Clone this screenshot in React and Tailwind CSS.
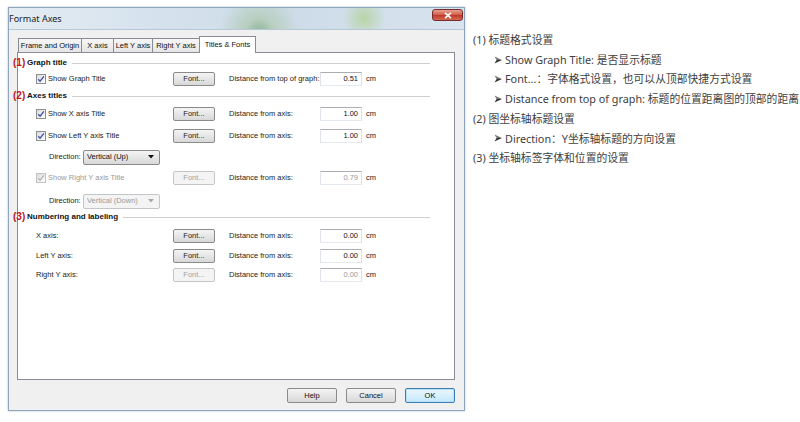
import React from "react";

const TABS = [
  { label: "Frame and Origin", w: "w-[63px]" },
  { label: "X axis", w: "w-[32px]" },
  { label: "Left Y axis", w: "w-[39px]" },
  { label: "Right Y axis", w: "w-[47px]" },
];

function Checkbox({ disabled }) {
  return (
    <span
      className={
        "w-[10px] h-[10px] flex items-center justify-center border bg-[linear-gradient(135deg,#dcdcdc,#ffffff)] " +
        (disabled ? "border-[#c2c2c2]" : "border-[#8e8f8f]")
      }
    >
      <svg width="8" height="8" viewBox="0 0 8 8">
        <path
          d="M1.2 4.2 L3.1 6.2 L6.9 1.4"
          fill="none"
          stroke={disabled ? "#b4b4b4" : "#3d57a0"}
          strokeWidth="1.4"
        />
      </svg>
    </span>
  );
}

function FontButton({ disabled }) {
  return (
    <button
      className={
        "w-[42px] h-[14px] rounded-[2px] border flex items-center justify-center text-[7.5px] " +
        (disabled
          ? "border-[#c3c6c8] bg-[#f4f4f4] text-[#a3a3a3]"
          : "border-[#8a8a8a] bg-[linear-gradient(#f4f4f4,#e6e6e6_50%,#d8d8d8)] text-[#222]")
      }
    >
      Font...
    </button>
  );
}

function NumBox({ value, disabled }) {
  return (
    <div
      className={
        "w-[42px] h-[14px] border border-[#abadb3] border-l-[#e2e3ea] border-r-[#dbdfe6] border-b-[#e3e9ef] bg-white flex items-center justify-end pr-[3px] text-[7.5px] " +
        (disabled ? "text-[#9a9a9a]" : "text-[#111]")
      }
    >
      {value}
    </div>
  );
}

function SettingRow({ mt, check, label, labelDisabled, disabled, distLabel, value }) {
  return (
    <div className={"flex items-center h-[14px] pl-[18px] " + mt}>
      <div className="w-[137px] flex items-center gap-[2px]">
        {check && <Checkbox disabled={labelDisabled} />}
        <span className={labelDisabled ? "text-[#9a9a9a]" : "text-[#222]"}>{label}</span>
      </div>
      <FontButton disabled={disabled} />
      <span className="ml-[14px] w-[91px] text-[#222]">{distLabel}</span>
      <NumBox value={value} disabled={disabled} />
      <span className="ml-[4px] text-[#222]">cm</span>
    </div>
  );
}

function Header({ mt, num, title }) {
  return (
    <div className={"relative flex items-center h-[14px] pl-[9px] pr-[24px] " + mt}>
      <span className="absolute left-[-5px] top-[0px] text-[10px] leading-[14px] font-bold text-[#c0141c] font-['Liberation_Sans',Arial,sans-serif]">
        ({num})
      </span>
      <span className="font-bold text-[8px] text-[#111]">{title}</span>
      <span className="flex-1 ml-[5px] h-px bg-[#cfcfcf]" />
    </div>
  );
}

function DirectionRow({ mt, value, disabled }) {
  return (
    <div className={"flex items-center h-[14px] pl-[31px] " + mt}>
      <span className="w-[34px] text-[#222]">Direction:</span>
      <div
        className={
          "w-[77px] h-[15px] rounded-[2px] border flex items-center justify-between pl-[3px] pr-[5px] " +
          (disabled
            ? "border-[#c3c6c8] bg-[#f4f4f4] text-[#9a9a9a]"
            : "border-[#8a8a8a] bg-[linear-gradient(#f4f4f4,#e6e6e6_50%,#d8d8d8)] text-[#111]")
        }
      >
        <span>{value}</span>
        <svg width="6" height="4" viewBox="0 0 6 4">
          <path d="M0 0 H6 L3 3.5 Z" fill={disabled ? "#a8a8a8" : "#111"} />
        </svg>
      </div>
    </div>
  );
}

function DlgButton({ label, primary }) {
  return (
    <button
      className={
        "w-[50px] h-[15px] rounded-[2px] border flex items-center justify-center text-[7.5px] text-[#111] " +
        (primary
          ? "border-[#3c7fb1] bg-[linear-gradient(#eaf6fd,#d9f0fc_50%,#bee6fd)] shadow-[inset_0_0_0_1px_#b9e0f7]"
          : "border-[#8a8a8a] bg-[linear-gradient(#f4f4f4,#e6e6e6_50%,#d8d8d8)]")
      }
    >
      {label}
    </button>
  );
}

function Bullet({ children }) {
  return (
    <div className="flex items-center pl-[21px] whitespace-nowrap">
      <svg className="w-[11px] shrink-0" width="11" height="8" viewBox="0 0 11 8">
        <path d="M0.5 0.5 L8 4 L2.6 4 Z" fill="#777" />
        <path d="M0.5 7.5 L8 4 L2.6 4 Z" fill="#333" />
      </svg>
      <span>{children}</span>
    </div>
  );
}

export default function App() {
  return (
    <div className="w-[800px] h-[422px] bg-white flex overflow-hidden font-['Liberation_Sans',Arial,sans-serif] text-[7.5px]">
      {/* dialog */}
      <div className="shrink-0 ml-[8px] mt-[7px] w-[457px] h-[404px] flex flex-col border border-[#8fa6bd] shadow-[0_0_2px_#a9bdd1]">
        <div className="h-[21px] flex items-start justify-between pl-[0px] pr-[1px] bg-[radial-gradient(circle_at_250px_24px,#8fb49a_0px,#b8cfc0_14px,transparent_40px),radial-gradient(circle_at_355px_10px,#b9d4a8_0px,transparent_22px),linear-gradient(90deg,#e4ecf3,#d6e3ee_30%,#cddbe8_60%,#d8e4ef)]">
          <span className="mt-[6px] text-[9px] text-[#1a1a1a] font-['Noto_Sans',sans-serif] leading-none">Format Axes</span>
          <div className="mt-[1px] w-[31px] h-[12px] rounded-[3px] border border-[#7a2a2a] bg-[linear-gradient(#e8a394,#d2604c_45%,#c13b2a_55%,#d06a52)] flex items-center justify-center">
            <svg width="8" height="7" viewBox="0 0 8 7">
              <path d="M1 0.8 L7 6.2 M7 0.8 L1 6.2" stroke="#fff" strokeWidth="1.6" />
            </svg>
          </div>
        </div>
        <div className="flex-1 flex flex-col bg-[#f0f0f0] border-t border-[#b6c7d6] pl-[8px] pr-[9px] pt-[6px]">
          {/* tabs */}
          <div className="flex items-end h-[16px] pl-[1px]">
            {TABS.map((t) => (
              <div
                key={t.label}
                className={
                  "h-[14px] border border-r-0 border-b-0 border-[#898c95] bg-[linear-gradient(#f6f6f6,#e6e6e6)] flex items-center justify-center text-[#111] " +
                  t.w
                }
              >
                {t.label}
              </div>
            ))}
            <div className="relative top-[1px] w-[57px] h-[17px] border border-b-0 border-[#898c95] bg-white flex items-center justify-center text-[#111] z-10">
              Titles &amp; Fonts
            </div>
          </div>
          {/* panel */}
          <div className="h-[328px] border border-[#898c95] bg-white pt-[3px] flex flex-col">
            <Header mt="" num="1" title="Graph title" />
            <SettingRow
              mt="mt-[2px]"
              check
              label="Show Graph Title"
              distLabel="Distance from top of graph:"
              value="0.51"
            />
            <Header mt="mt-[3px]" num="2" title="Axes titles" />
            <SettingRow
              mt="mt-[4px]"
              check
              label="Show X axis Title"
              distLabel="Distance from axis:"
              value="1.00"
            />
            <SettingRow
              mt="mt-[8px]"
              check
              label="Show Left Y axis Title"
              distLabel="Distance from axis:"
              value="1.00"
            />
            <DirectionRow mt="mt-[7px]" value="Vertical (Up)" />
            <SettingRow
              mt="mt-[7px]"
              check
              labelDisabled
              disabled
              label="Show Right Y axis Title"
              distLabel="Distance from axis:"
              value="0.79"
            />
            <DirectionRow mt="mt-[9px]" value="Vertical (Down)" disabled />
            <Header mt="mt-[2px]" num="3" title="Numbering and labeling" />
            <SettingRow mt="mt-[5px]" label="X axis:" distLabel="Distance from axis:" value="0.00" />
            <SettingRow mt="mt-[6px]" label="Left Y axis:" distLabel="Distance from axis:" value="0.00" />
            <SettingRow
              mt="mt-[5px]"
              label="Right Y axis:"
              disabled
              distLabel="Distance from axis:"
              value="0.00"
            />
          </div>
          {/* buttons */}
          <div className="flex justify-end gap-[9px] mt-[8px]">
            <DlgButton label="Help" />
            <DlgButton label="Cancel" />
            <DlgButton label="OK" primary />
          </div>
        </div>
      </div>

      {/* notes */}
      <div className="shrink-0 ml-[8px] mt-[30px] flex flex-col text-[10.8px] leading-[19.7px] text-[#404040] font-['Noto_Sans','Noto_Sans_CJK_SC',sans-serif]">
        <div className="whitespace-nowrap">(1) 标题格式设置</div>
        <Bullet>Show Graph Title: 是否显示标题</Bullet>
        <Bullet>Font...：字体格式设置，也可以从顶部快捷方式设置</Bullet>
        <Bullet>Distance from top of graph: 标题的位置距离图的顶部的距离</Bullet>
        <div className="whitespace-nowrap">(2) 图坐标轴标题设置</div>
        <Bullet>Direction：Y坐标轴标题的方向设置</Bullet>
        <div className="whitespace-nowrap">(3) 坐标轴标签字体和位置的设置</div>
      </div>
    </div>
  );
}
